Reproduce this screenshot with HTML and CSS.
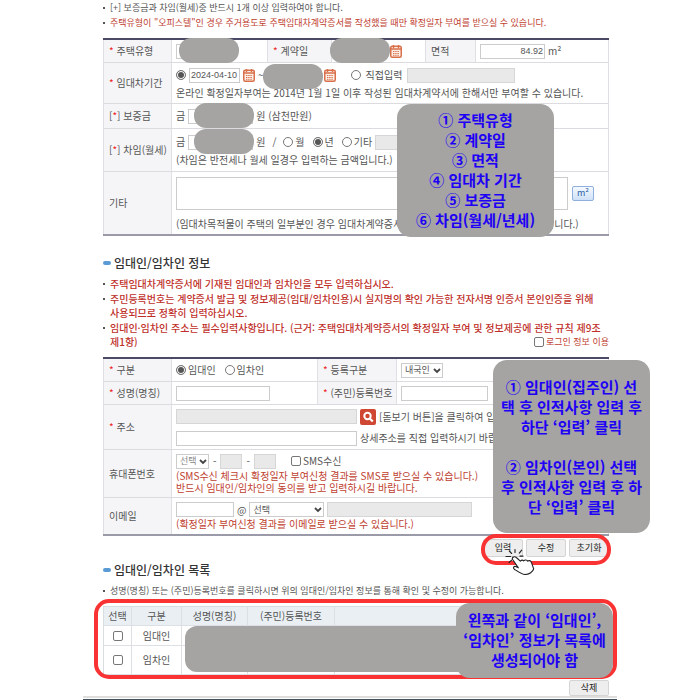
FILE: index.html
```html
<!DOCTYPE html>
<html lang="ko">
<head>
<meta charset="utf-8">
<title>확정일자 신청</title>
<link rel="stylesheet" href="styles.css">
</head>
<body>
<svg class="defs" aria-hidden="true">
  <symbol id="calendar" viewBox="0 0 12 13">
    <rect x="0.75" y="1.25" width="10.5" height="11" rx="1.5" fill="#fbeee6" stroke="#d9704a" stroke-width="1.5"/>
    <path d="M3.5 0v3M8.5 0v3M1 4h10" stroke="#d9704a" stroke-width="1.4" fill="none"/>
    <path d="M3 6.5h6M3 8.5h6M3 10.3h6" stroke="#d9704a" stroke-width="1" stroke-dasharray="1.4 0.8" fill="none"/>
  </symbol>
  <symbol id="chevron" viewBox="0 0 8 6">
    <path d="M1 1l3 3 3-3" fill="none" stroke="currentColor" stroke-width="1.8"/>
  </symbol>
</svg>
<main class="page">
  <section class="section">
    <ul class="notes">
      <li>[+] 보증금과 차임(월세)중 반드시 1개 이상 입력하여야 합니다.</li>
      <li class="warn">주택유형이 "오피스텔"인 경우 주거용도로 주택임대차계약증서를 작성했을 때만 확정일자 부여를 받으실 수 있습니다.</li>
    </ul>
    <div class="form-frame">
      <table class="form">
        <colgroup><col class="c-label"><col class="c-type"><col class="c-date-label"><col class="c-date"><col class="c-area-label"><col></colgroup>
        <tr class="row-s">
          <th><i>*</i> <label for="type">주택유형</label></th>
          <td><div class="line"><span class="masked"><input id="type" class="w60"><span class="mask"></span></span></div></td>
          <th><i>*</i> <label for="cdate">계약일</label></th>
          <td><div class="line"><span class="masked"><input id="cdate" class="w51"><span class="mask mask-left"></span></span><button class="icon" aria-label="계약일 달력"><svg><use href="#calendar"/></svg></button></div></td>
          <th><label for="area">면적</label></th>
          <td><div class="line"><input id="area" class="w65 num" value="84.92"><span>m²</span></div></td>
        </tr>
        <tr class="row-m">
          <th><i>*</i> 임대차기간</th>
          <td colspan="5">
            <div class="line">
              <input type="radio" name="term" id="term1" aria-label="기간 선택" checked><input class="w51" value="2024-04-10" aria-label="시작일"><button class="icon" aria-label="시작일 달력"><svg><use href="#calendar"/></svg></button>
              <span>~</span>
              <span class="masked"><input class="w54" aria-label="종료일"><span class="mask mask-low"></span></span><button class="icon" aria-label="종료일 달력"><svg><use href="#calendar"/></svg></button>
              <span class="choice direct"><input type="radio" name="term" id="term2"><label for="term2">직접입력</label></span><input class="w108" disabled aria-label="직접입력 기간">
            </div>
            <p>온라인 확정일자부여는 2014년 1월 1일 이후 작성된 임대차계약서에 한해서만 부여할 수 있습니다.</p>
          </td>
        </tr>
        <tr class="row-d">
          <th>[<i>*</i>] <label for="deposit">보증금</label></th>
          <td colspan="5"><div class="line"><span>금</span><span class="masked"><input id="deposit" class="w65"><span class="mask mask-in"></span></span><span>원 (삼천만원)</span></div></td>
        </tr>
        <tr class="row-r">
          <th>[<i>*</i>] <label for="rent">차임(월세)</label></th>
          <td colspan="5">
            <div class="line">
              <span>금</span><span class="masked"><input id="rent" class="w65"><span class="mask mask-in"></span></span><span>원</span><span class="slash">/</span>
              <span class="choice"><input type="radio" name="per" id="p1"><label for="p1">월</label></span>
              <span class="choice"><input type="radio" name="per" id="p2" checked><label for="p2">년</label></span>
              <span class="choice"><input type="radio" name="per" id="p3"><label for="p3">기타</label></span>
              <input class="w65" disabled aria-label="기타 주기">
            </div>
            <p>(차임은 반전세나 월세 일경우 입력하는 금액입니다.)</p>
          </td>
        </tr>
        <tr class="row-e">
          <th><label for="etc">기타</label></th>
          <td colspan="5">
            <div class="line"><textarea id="etc"></textarea><button class="unit">m²</button></div>
            <p>(임대차목적물이 주택의 일부분인 경우 임대차계약증서에 기재된 해당 면적을 입력하여야 합니다.)</p>
          </td>
        </tr>
      </table>
    </div>
    <aside class="callout callout-items">① 주택유형<br>② 계약일<br>③ 면적<br>④ 임대차 기간<br>⑤ 보증금<br>⑥ 차임(월세/년세)</aside>
  </section>

  <section class="section">
    <h2>임대인/임차인 정보</h2>
    <div class="notes-row">
      <ul class="notes strong">
        <li>주택임대차계약증서에 기재된 임대인과 임차인을 모두 입력하십시오.</li>
        <li>주민등록번호는 계약증서 발급 및 정보제공(임대/임차인용)시 실지명의 확인 가능한 전자서명 인증서 본인인증을 위해<br>사용되므로 정확히 입력하십시오.</li>
        <li>임대인·임차인 주소는 필수입력사항입니다. (근거: 주택임대차계약증서의 확정일자 부여 및 정보제공에 관한 규칙 제9조<br>제1항)</li>
      </ul>
      <span class="choice login"><input type="checkbox" id="login"><label for="login">로그인 정보 이용</label></span>
    </div>
    <div class="form-frame">
      <table class="form">
        <colgroup><col class="c-label"><col class="c-name"><col class="c-reg-label"><col></colgroup>
        <tr class="row-s">
          <th><i>*</i> 구분</th>
          <td><div class="line"><span class="choice"><input type="radio" name="party" id="lessor" checked><label for="lessor">임대인</label></span><span class="choice lessee"><input type="radio" name="party" id="lessee"><label for="lessee">임차인</label></span></div></td>
          <th><i>*</i> <label for="reg">등록구분</label></th>
          <td><div class="line"><span class="select w42"><select id="reg"><option>내국인</option></select><svg><use href="#chevron"/></svg></span></div></td>
        </tr>
        <tr class="row-s">
          <th><i>*</i> <label for="name">성명(명칭)</label></th>
          <td><div class="line"><input id="name" class="w94"></div></td>
          <th><i>*</i> <label for="rrn">(주민)등록번호</label></th>
          <td><div class="line"><input id="rrn" class="w87"></div></td>
        </tr>
        <tr class="row-a">
          <th><i>*</i> <label for="addr">주소</label></th>
          <td colspan="3">
            <div class="line"><input id="addr" class="w181" disabled><button class="search" aria-label="주소 찾기"><svg viewBox="0 0 16 16"><circle cx="7.5" cy="7" r="3.2" fill="none" stroke="#fff" stroke-width="2"/><path d="M9.8 9.5l3 3" stroke="#fff" stroke-width="2.2"/></svg></button><span>[돋보기 버튼]을 클릭하여 입력하십시오.</span></div>
            <div class="line second"><input class="w181" aria-label="상세주소"><span>상세주소를 직접 입력하시기 바랍니다.</span></div>
          </td>
        </tr>
        <tr class="row-p">
          <th><label for="tel1">휴대폰번호</label></th>
          <td colspan="3">
            <div class="line">
              <span class="select pale w33"><select id="tel1"><option>선택</option></select><svg><use href="#chevron"/></svg></span><span>-</span><input class="w22" disabled aria-label="가운데 번호"><span>-</span><input class="w22" disabled aria-label="끝 번호">
              <span class="choice sms"><input type="checkbox" id="sms"><label for="sms">SMS수신</label></span>
            </div>
            <p class="warn">(SMS수신 체크시 확정일자 부여신청 결과를 SMS로 받으실 수 있습니다.)<br>반드시 임대인/임차인의 동의를 받고 입력하시길 바랍니다.</p>
          </td>
        </tr>
        <tr class="row-i">
          <th><label for="mail">이메일</label></th>
          <td colspan="3">
            <div class="line mail"><input id="mail" class="w58"><span>@</span><span class="select w75"><select aria-label="메일 도메인"><option>선택</option></select><svg><use href="#chevron"/></svg></span><input class="w145" disabled aria-label="직접 입력 도메인"></div>
            <p class="warn">(확정일자 부여신청 결과를 이메일로 받으실 수 있습니다.)</p>
          </td>
        </tr>
      </table>
    </div>
    <div class="actions"><button>입력</button><button>수정</button><button>초기화</button><span class="ring"></span>
      <svg class="hand" viewBox="0 0 90 80" aria-hidden="true">
        <g fill="none" stroke="#222" stroke-width="3.4" stroke-linecap="round">
          <path d="M30 4v9M13 9l7 7M50 6l-7 9M3 25h14M45 24h9M12 43l8-7"/>
          <path d="M27 26c-5 0-6 4-4 8l17 25-8-4c-5-2-9 4-4 8 12 8 21 15 32 16 13 0 24-9 26-17L79 42c-2-5-7-6-11-3-2-4-8-5-12-1-3-3-7-2-10 1L34 28c-2-2-4-3-7-2z" fill="#fff" stroke-linejoin="round"/>
        </g>
      </svg>
    </div>
    <aside class="callout callout-steps">① 임대인(집주인) 선<br>택 후 인적사항 입력 후<br>하단 ‘입력’ 클릭<br><br>② 임차인(본인) 선택<br>후 인적사항 입력 후 하<br>단 ‘입력’ 클릭</aside>
  </section>

  <section class="section">
    <h2 class="list-title">임대인/임차인 목록</h2>
    <ul class="notes">
      <li>성명(명칭) 또는 (주민)등록번호를 클릭하시면 위의 임대인/임차인 정보를 통해 확인 및 수정이 가능합니다.</li>
    </ul>
    <div class="list-frame">
      <table class="list">
        <colgroup><col class="l-pick"><col class="l-kind"><col class="l-name"><col class="l-reg"><col></colgroup>
        <tr><th>선택</th><th>구분</th><th>성명(명칭)</th><th>(주민)등록번호</th><th></th></tr>
        <tr><td><input type="checkbox" aria-label="임대인 선택"></td><td>임대인</td><td></td><td></td><td></td></tr>
        <tr class="tall"><td><input type="checkbox" aria-label="임차인 선택"></td><td>임차인</td><td></td><td></td><td></td></tr>
      </table>
      <span class="cover"></span>
      <span class="ring"></span>
      <aside class="callout callout-result">왼쪽과 같이 ‘임대인’,<br>‘임차인’ 정보가 목록에<br>생성되어야 함</aside>
    </div>
    <div class="actions delete"><button>삭제</button></div>
  </section>
  <footer></footer>
</main>
</body>
</html>
```
FILE: styles.css
```css
* { box-sizing: border-box; }
body {
  margin: 0;
  background: #fff;
  color: #555;
  font: 10px/12px "Noto Sans CJK KR", sans-serif;
}
.defs { position: absolute; width: 0; height: 0; }
.page { padding: 1px 91px 0 103px; }
.section { position: relative; }
p { margin: 0; white-space: nowrap; }
.warn { color: #c0402f; }

h2 {
  display: flex;
  align-items: center;
  gap: 3px;
  margin: 17px 0 4px;
  font-size: 12px;
  line-height: 20px;
  font-weight: 500;
  color: #333;
}
h2::before { content: ""; width: 8px; height: 4px; border-radius: 2px; background: #5b9bd5; }
.list-title { margin-top: 3px; }

.notes {
  display: grid;
  gap: 1px;
  margin: 0 0 8px;
  padding: 0;
  list-style: none;
  font-size: 9px;
  line-height: 14px;
  white-space: nowrap;
}
.notes li { position: relative; padding-left: 7px; }
.notes li::before { content: ""; position: absolute; left: 0; top: 6px; width: 2px; height: 2px; background: #555; }
.strong { font-size: 10px; font-weight: 500; color: #c0302a; }
.notes-row { display: grid; }
.notes-row > * { grid-area: 1 / 1; }
.login { align-self: end; justify-self: end; margin-bottom: 8px; font-size: 9px; line-height: 14px; color: #c0402f; }

.form-frame { border-top: 2px solid #4b4a66; border-bottom: 2px solid #9a9aa8; }
table { width: 100%; border-spacing: 0; table-layout: fixed; }
.form { border-left: 1px solid #e0e0e4; border-right: 1px solid #e0e0e4; }
.form th, .form td { padding: 0 4px; border-bottom: 1px solid #dcdce0; text-align: left; font-weight: 400; }
.form th { padding-left: 5px; background: #f5f5f8; border-right: 1px solid #e0e0e4; white-space: nowrap; }
.form td + th { border-left: 1px solid #e0e0e4; }
.form tr:last-child > * { border-bottom: 0; }
.form i { color: #e22; font-style: normal; }
.c-label { width: 68px; }
.c-type { width: 95px; }
.c-date-label { width: 65px; }
.c-date { width: 93px; }
.c-area-label { width: 51px; }
.c-name { width: 145px; }
.c-reg-label { width: 80px; }
.row-s { height: 23px; }
.row-m { height: 41px; }
.row-d { height: 25px; }
.row-r { height: 43px; }
.row-e { height: 62px; }
.row-a { height: 45px; }
.row-p { height: 48px; }
.row-i { height: 36px; }

.line { display: flex; align-items: center; gap: 4px; white-space: nowrap; }
.line + p { margin-top: 4px; }
.row-p .line + p, .row-i .line + p { margin-top: 1px; }
.row-e .line + p { margin-top: 8px; }
.second { margin-top: 6px; }
.row-s .line, .row-m .line, .row-d .line, .row-r .line, .row-a .line, .mail { gap: 3px; }

input, select, textarea, button { margin: 0; font: inherit; color: inherit; }
input, textarea { height: 15px; padding: 0 1px; border: 1px solid #ccc; border-radius: 0; background: #fff; font-family: "Liberation Sans", sans-serif; font-size: 9px; }
input:disabled { background: #e9e9e9; border-color: #d6d6d6; }
textarea { flex: 0 1 392px; height: 33px; resize: none; }
.num { text-align: right; }
input[type="radio"], input[type="checkbox"] { appearance: none; flex: none; width: 10px; height: 10px; padding: 0; border: 1px solid #777; }
input[type="radio"] { border-radius: 50%; }
input[type="radio"]:checked { background: #555; box-shadow: inset 0 0 0 1px #fff; }
input[type="checkbox"] { border-radius: 2px; }
.choice { display: inline-flex; align-items: center; gap: 2px; }
.row-r .choice { margin-right: 5px; }
.row-r .choice:nth-last-child(2) { margin-right: 0; }
.slash { margin: 0 4px; }
.direct { gap: 5px; margin: 0 2px 0 12px; }
.lessee { margin-left: 6px; }
.sms { margin-left: 11px; }
.w22 { width: 22px; }
.w33 { width: 33px; }
.w42 { width: 42px; }
.w51 { width: 51px; }
.w54 { width: 54px; }
.w58 { width: 58px; }
.w60 { width: 60px; }
.w65 { width: 65px; }
.w75 { width: 75px; }
.w87 { width: 87px; }
.w94 { width: 94px; }
.w108 { width: 108px; }
.w145 { width: 145px; }
.w181 { width: 181px; }

.select { position: relative; display: inline-flex; }
.select select { appearance: none; width: 100%; height: 15px; padding: 0 3px; border: 1px solid #ccc; border-radius: 0; background: #fff; font-size: 9px; line-height: 12px; }
.select svg { position: absolute; right: 2px; top: 5px; width: 8px; height: 6px; color: #444; pointer-events: none; }
.pale { color: #888; }

.icon { display: flex; padding: 0; border: 0; background: none; }
.icon svg { width: 12px; height: 13px; }
.search { display: flex; padding: 0; border: 0; border-radius: 2px; background: #cf4632; }
.search svg { width: 16px; height: 16px; }
.unit { width: 22px; height: 15px; padding: 0; border: 1px solid #8fb0dc; border-radius: 2px; background: linear-gradient(#f4f9ff, #cfe1f7); color: #2b5fa5; font-size: 9px; line-height: 12px; }

.masked { position: relative; display: inline-flex; }
.mask { position: absolute; left: 3px; top: -6px; width: 60px; height: 25px; border-radius: 12px; background: #a5a4a2; }
.mask-left { left: -6px; }
.mask-low { left: -4px; top: -4px; }
.mask-in { left: 6px; }

.actions { position: relative; display: flex; justify-content: flex-end; gap: 3px; margin-top: 3px; }
.actions button { width: 40px; height: 18px; padding: 0; border: 1px solid #d4d4d4; border-radius: 2px; background: #eee; color: #222; font-size: 9px; line-height: 14px; }
.delete { margin-top: 5px; }
.delete button { height: 16px; }
.ring { position: absolute; border: 4px solid #f93333; border-radius: 15px; }
.actions .ring { right: -2px; top: -5px; width: 130px; height: 31px; }
.hand { position: absolute; right: 74px; top: 9px; width: 30px; height: 27px; }

.callout {
  position: absolute;
  width: 157px;
  border-radius: 14px;
  background: #a5a4a2;
  color: #2000f5;
  font-size: 15px;
  line-height: 20px;
  font-weight: 700;
  text-align: center;
  white-space: nowrap;
}
.callout-items { right: 55px; bottom: -1px; padding: 6px 0 7px; }
.callout-steps { right: -41px; bottom: 24px; padding: 17px 0 16px; }
.callout-result { right: -4px; top: -3px; padding: 7px 0 8px; }

.list-frame { position: relative; }
.list { border-top: 1px solid #d8dde2; border-left: 1px solid #d8dde2; }
.list th, .list td { height: 20px; padding: 0; border-right: 1px solid #dcdfe3; border-bottom: 1px solid #dcdfe3; text-align: center; font-weight: 400; white-space: nowrap; }
.list th { height: 19px; background: #eaeff4; }
.list .tall td { height: 29px; }
.list td input { display: block; margin: 0 auto; }
.l-pick { width: 28px; }
.l-kind { width: 50px; }
.l-name { width: 66px; }
.l-reg { width: 87px; }
.cover { position: absolute; left: 82px; right: 20px; top: 20px; height: 46px; border-radius: 12px; background: #a5a4a2; }
.list-frame .ring { left: -9px; right: -8px; top: -7px; height: 80px; }

footer { height: 4px; margin: 0 -8px 0 -20px; border-top: 2px solid #dedede; border-bottom: 1px solid #41505c; }
```
